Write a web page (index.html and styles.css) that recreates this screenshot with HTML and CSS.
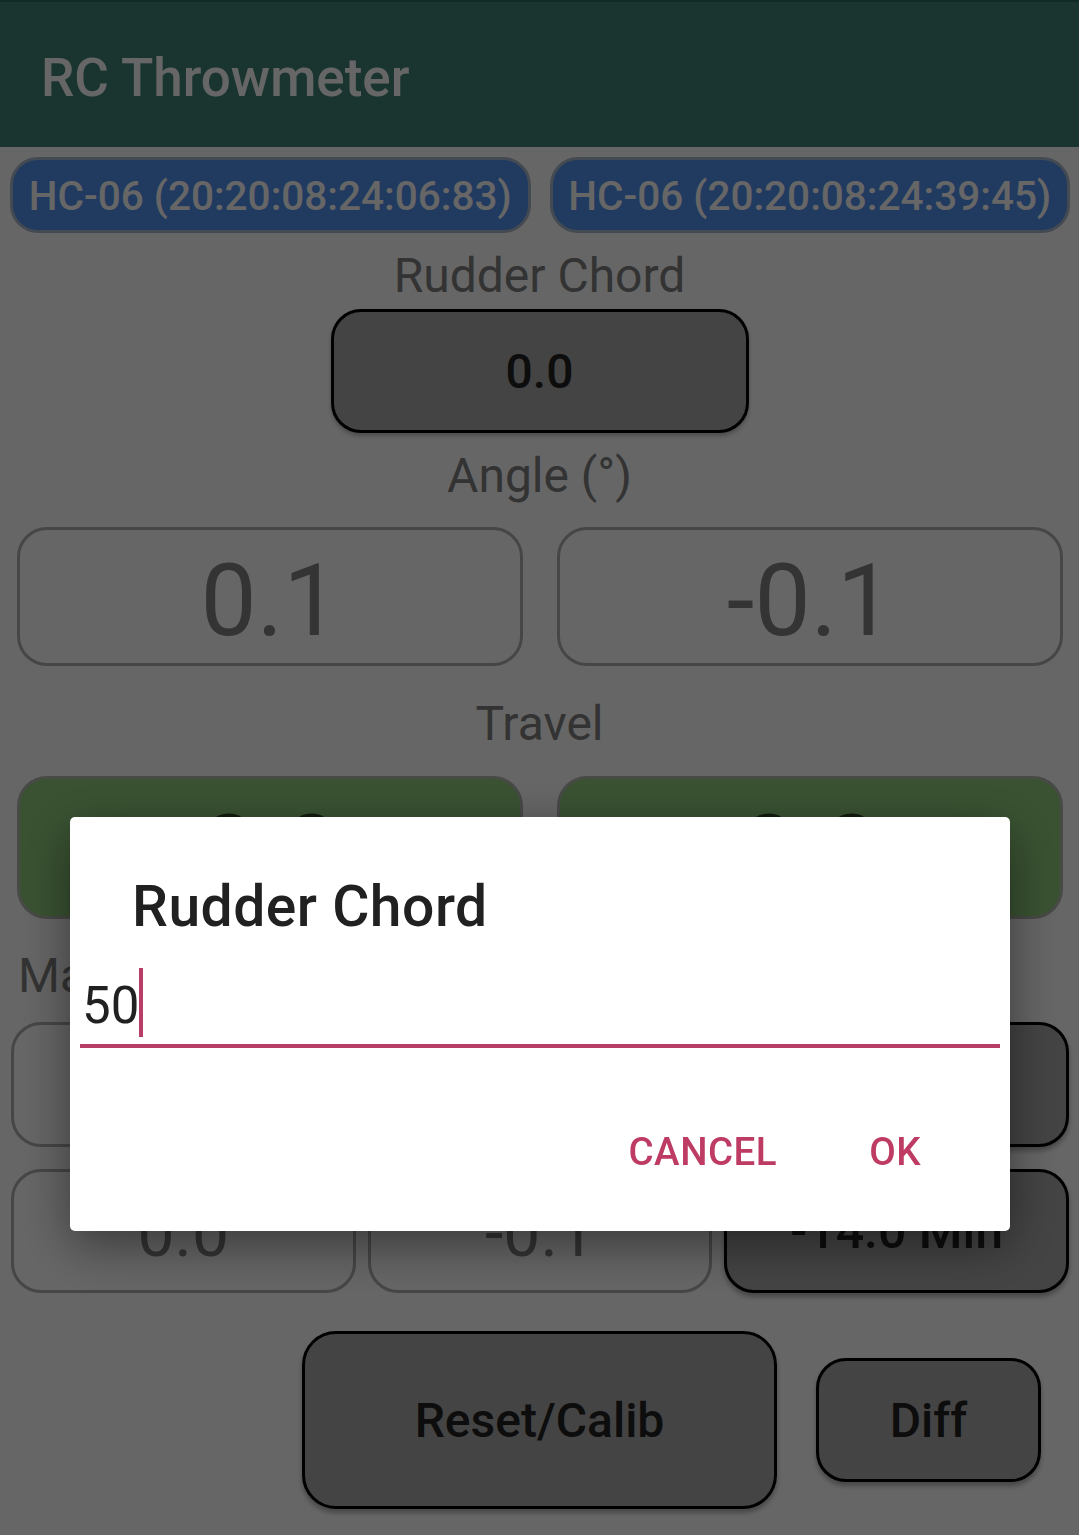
FILE: index.html
```html
<!DOCTYPE html>
<html lang="en">
<head>
<meta charset="utf-8">
<title>RC Throwmeter</title>
<link rel="stylesheet" href="styles.css">
</head>
<body>
<div class="app">
  <header class="toolbar">
    <h1 class="title">RC Throwmeter</h1>
  </header>
  <main class="content">
    <div class="bt-row">
      <div class="bt">HC-06 (20:20:08:24:06:83)</div>
      <div class="bt">HC-06 (20:20:08:24:39:45)</div>
    </div>
    <div class="label label-chord">Rudder Chord</div>
    <div class="chord-box">0.0</div>
    <div class="label label-angle">Angle (°)</div>
    <div class="pair pair-angle">
      <div class="val outline">0.1</div>
      <div class="val outline">-0.1</div>
    </div>
    <div class="label label-travel">Travel</div>
    <div class="pair pair-travel">
      <div class="val green">0.0</div>
      <div class="val green">0.0</div>
    </div>
    <div class="label-left">Max/Min</div>
    <div class="triple triple-first">
      <div class="cell outline">0.0</div>
      <div class="cell outline">0.1</div>
      <div class="cell filled">14.0 Max</div>
    </div>
    <div class="triple triple-second">
      <div class="cell outline">0.0</div>
      <div class="cell outline">-0.1</div>
      <div class="cell filled">-14.0 Min</div>
    </div>
    <div class="actions">
      <div class="btn reset">Reset/Calib</div>
      <div class="btn diff">Diff</div>
    </div>
  </main>
</div>
<div class="scrim"></div>
<div class="dialog">
  <h2 class="dialog-title">Rudder Chord</h2>
  <div class="edit">
    <span class="edit-text">50</span><span class="caret"></span>
  </div>
  <div class="dialog-actions">
    <span class="dlg-btn">CANCEL</span>
    <span class="dlg-btn">OK</span>
  </div>
</div>
</body>
</html>
```

FILE: styles.css
```css
* { box-sizing: border-box; }

html, body {
  margin: 0;
  padding: 0;
  background: #ffffff;
  font-family: Roboto, "Noto Sans", "Liberation Sans", sans-serif;
}

.app {
  width: 1079px;
  min-height: 1535px;
  background: #ffffff;
}

.toolbar {
  height: 147px;
  border-top: 2px solid #28695c;
  background: #418478;
  padding-left: 41px;
}

.title {
  margin: 44px 0 0;
  font-size: 53px;
  line-height: 64px;
  font-weight: 500;
  color: #ffffff;
}

.bt-row {
  margin-top: 10px;
  display: grid;
  grid-template-columns: 1fr 1fr;
  gap: 19px;
  padding: 0 9px 0 10px;
}

.bt {
  height: 76px;
  border: 3px solid #aab9cd;
  border-radius: 28px;
  background: #5391f0;
  color: #ffffff;
  font-size: 40.5px;
  font-weight: 500;
  display: flex;
  align-items: center;
  justify-content: center;
  white-space: nowrap;
  padding-top: 2px;
}

.label {
  text-align: center;
  color: #808080;
  font-size: 48px;
  line-height: 56px;
  height: 56px;
}

.label-chord {
  margin-top: 15px;
  font-size: 48px;
}

.chord-box {
  width: 418px;
  height: 124px;
  margin: 5px auto 0;
  background: #aaaaaa;
  border: 3px solid #000000;
  border-radius: 30px;
  color: #222222;
  font-size: 48px;
  font-weight: 500;
  display: flex;
  align-items: center;
  justify-content: center;
  box-shadow: 0 3px 4px rgba(0, 0, 0, 0.25);
}

.label-angle { margin-top: 15px; }
.label-travel { margin-top: 30px; }

.pair {
  display: grid;
  grid-template-columns: 1fr 1fr;
  gap: 34px;
  padding: 0 16px 0 17px;
}

.pair-angle { margin-top: 23px; }
.pair-travel { margin-top: 24px; }

.val {
  display: flex;
  align-items: center;
  justify-content: center;
  border-radius: 30px;
  font-size: 100px;
  color: #828282;
  padding-top: 8px;
}

.val.outline {
  height: 139px;
  border: 3px solid #b0b0b0;
}

.val.green {
  height: 143px;
  background: #91cd7d;
  border: 3px solid #b3b8b0;
  color: #2e4a24;
}

.label-left {
  margin-top: 29px;
  padding-left: 18px;
  color: #808080;
  font-size: 48px;
  line-height: 56px;
  height: 56px;
}

.triple {
  display: grid;
  grid-template-columns: 1fr 1fr 1fr;
  gap: 12px;
  padding: 0 10px 0 11px;
}

.triple-first { margin-top: 18px; }
.triple-first .cell { height: 125px; }
.triple-second { margin-top: 22px; }
.triple-second .cell { height: 124px; }

.cell {
  display: flex;
  align-items: center;
  justify-content: center;
  border-radius: 30px;
  white-space: nowrap;
}

.cell.outline {
  border: 3px solid #b0b0b0;
  font-size: 66px;
  color: #828282;
  padding-top: 4px;
}

.cell.filled {
  background: #aaaaaa;
  border: 3px solid #000000;
  font-size: 50px;
  font-weight: 500;
  color: #222222;
  box-shadow: 0 4px 5px rgba(0, 0, 0, 0.3);
}

.actions {
  margin-top: 38px;
  display: grid;
  grid-template-columns: 1fr 475px 1fr;
  align-items: center;
}

.btn {
  background: #aaaaaa;
  border: 3px solid #000000;
  display: flex;
  align-items: center;
  justify-content: center;
  font-size: 48px;
  font-weight: 500;
  color: #222222;
  box-shadow: 0 4px 5px rgba(0, 0, 0, 0.3);
}

.reset {
  grid-column: 2;
  height: 178px;
  border-radius: 34px;
}

.diff {
  grid-column: 3;
  justify-self: start;
  width: 225px;
  height: 124px;
  margin-left: 39px;
  border-radius: 30px;
}

.scrim {
  position: fixed;
  inset: 0;
  background: rgba(0, 0, 0, 0.6);
}

.dialog {
  position: fixed;
  left: 70px;
  top: 817px;
  width: 940px;
  height: 414px;
  background: #ffffff;
  border-radius: 5px;
  box-shadow: 0 14px 50px rgba(0, 0, 0, 0.45);
  padding-top: 58px;
}

.dialog-title {
  margin: 0 0 0 62px;
  font-size: 57px;
  line-height: 64px;
  font-weight: 500;
  letter-spacing: 0.5px;
  color: #212121;
}

.edit {
  margin: 29px 10px 0;
  display: flex;
  align-items: flex-start;
  padding: 0 0 7px 2px;
  border-bottom: 4px solid #b93e67;
}

.edit-text {
  margin-top: 7px;
  font-size: 51px;
  line-height: 61px;
  color: #212121;
}

.caret {
  width: 4px;
  height: 69px;
  background: #b93e67;
}

.dialog-actions {
  margin-top: 81px;
  display: flex;
  justify-content: flex-end;
  gap: 92px;
  padding-right: 89px;
}

.dlg-btn {
  font-size: 38.5px;
  line-height: 45px;
  font-weight: 500;
  letter-spacing: 0.5px;
  color: #be3b63;
}
```
